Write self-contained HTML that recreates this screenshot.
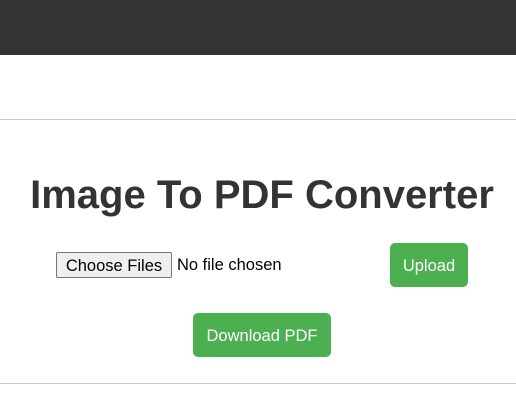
<!DOCTYPE html>
<html><head><style>
body{margin:0;width:516px;height:415px;background:#fff;font-family:"Liberation Sans",Arial,sans-serif;position:relative;overflow:hidden}
.top{position:absolute;left:0;top:0;width:516px;height:55px;background:#333}
.hr{position:absolute;left:0;width:516px;height:1px;background:#ccc}
h1{position:absolute;left:0;width:524px;text-align:center;top:172px;margin:0;font-size:40px;font-weight:bold;color:#333;line-height:46px}
.cf{position:absolute;left:56px;top:252px;width:114px;height:24px;border:1px solid #767676;border-radius:2px;background:#efefef;font-size:16.5px;line-height:26px;text-align:center;color:#000}
.nf{position:absolute;left:177px;top:256px;font-size:16.5px;color:#000}
.btn{position:absolute;background:#4caf50;color:#fff;border-radius:5px;font-size:16.5px;text-align:center;line-height:46px;height:44px}
</style></head><body>
<div class="top"></div>
<div class="hr" style="top:119px"></div>
<h1>Image To PDF Converter</h1>
<div class="cf">Choose Files</div>
<div class="nf">No file chosen</div>
<div class="btn" style="left:390px;top:243px;width:78px">Upload</div>
<div class="btn" style="left:193px;top:313px;width:138px">Download PDF</div>
<div class="hr" style="top:383px"></div>
</body></html>
